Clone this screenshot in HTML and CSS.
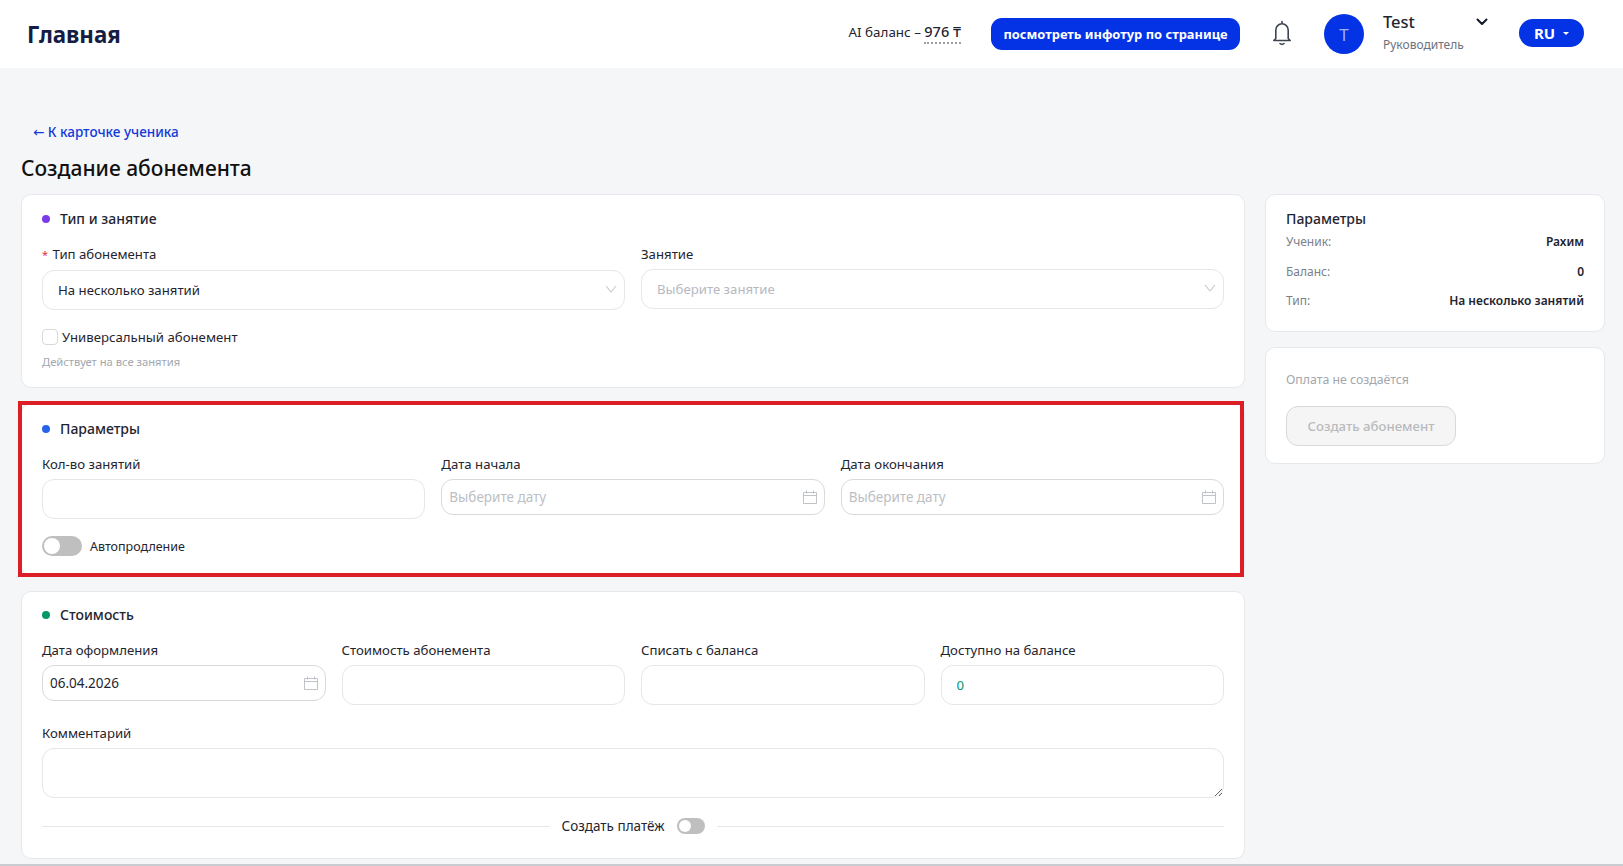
FILE: index.html
```html
<!DOCTYPE html>
<html lang="ru">

<head>
    <meta charset="UTF-8">
    <meta name="viewport" content="width=device-width, initial-scale=1.0">
    <title>Создание абонемента</title>
    <link rel="stylesheet" href="styles.css">
</head>

<body>
    <header class="topbar">
        <div class="topbar-title">Главная</div>
        <div class="ai-balance">AI баланс – <span class="ai-amount">976 ₸</span></div>
        <button class="tour-btn" type="button">посмотреть инфотур по странице</button>
        <svg class="bell" viewBox="0 0 24 28" fill="none" stroke="#3d4450" stroke-width="1.6" stroke-linecap="round" stroke-linejoin="round">
            <path d="M12 2.500v1.600M5.800 19.500V11a6.200 6.200 0 0 1 12.400 0v8.500l2 2H3.800z" />
            <path d="M10 24.500q2 1.800 4 0" />
        </svg>
        <div class="avatar">T</div>
        <div class="user">
            <div class="user-name">Test</div>
            <div class="user-role">Руководитель</div>
        </div>
        <svg class="user-arrow" viewBox="0 0 12 8" fill="none" stroke="#111827" stroke-width="2" stroke-linecap="round" stroke-linejoin="round">
            <path d="M1.500 1.500 6 6l4.500-4.500" />
        </svg>
        <div class="lang">RU <span class="lang-caret"></span></div>
    </header>

    <main class="page">
        <a class="back-link" href="#">← К карточке ученика</a>
        <h1>Создание абонемента</h1>

        <div class="columns">
            <div class="form-col">
                <section class="card card-type">
                    <h2 class="card-title"><span class="dot dot-purple"></span>Тип и занятие</h2>
                    <div class="grid grid-2">
                        <div class="field">
                            <label><span class="required">*</span> Тип абонемента</label>
                            <div class="select">
                                <span>На несколько занятий</span>
                                <svg class="chevron" viewBox="0 0 12 8" fill="none" stroke="#c4c7cc" stroke-width="1.100"><path d="M1 1l5 6 5-6" /></svg>
                            </div>
                        </div>
                        <div class="field">
                            <label>Занятие</label>
                            <div class="select select-empty">
                                <span>Выберите занятие</span>
                                <svg class="chevron" viewBox="0 0 12 8" fill="none" stroke="#c4c7cc" stroke-width="1.100"><path d="M1 1l5 6 5-6" /></svg>
                            </div>
                        </div>
                    </div>
                    <label class="check"><span class="check-box"></span>Универсальный абонемент</label>
                    <p class="hint">Действует на все занятия</p>
                </section>

                <section class="card card-params">
                    <h2 class="card-title"><span class="dot dot-blue"></span>Параметры</h2>
                    <div class="grid grid-3">
                        <div class="field">
                            <label>Кол-во занятий</label>
                            <input class="input" type="text">
                        </div>
                        <div class="field">
                            <label>Дата начала</label>
                            <div class="date">
                                <span class="date-empty">Выберите дату</span>
                                <svg class="cal" viewBox="0 0 14 14" fill="none" stroke="#bfc2c7"><path d="M.5 2.500h13v11H.5zM.5 5.500h13M3.500.5v3M10.500.5v3" /></svg>
                            </div>
                        </div>
                        <div class="field">
                            <label>Дата окончания</label>
                            <div class="date">
                                <span class="date-empty">Выберите дату</span>
                                <svg class="cal" viewBox="0 0 14 14" fill="none" stroke="#bfc2c7"><path d="M.5 2.500h13v11H.5zM.5 5.500h13M3.500.5v3M10.500.5v3" /></svg>
                            </div>
                        </div>
                    </div>
                    <div class="renew">
                        <label class="switch"><input type="checkbox"><span class="slider"></span></label>
                        <span>Автопродление</span>
                    </div>
                    <div class="highlight"></div>
                </section>

                <section class="card card-cost">
                    <h2 class="card-title"><span class="dot dot-green"></span>Стоимость</h2>
                    <div class="grid grid-4">
                        <div class="field">
                            <label>Дата оформления</label>
                            <div class="date date-filled">
                                <span>06.04.2026</span>
                                <svg class="cal" viewBox="0 0 14 14" fill="none" stroke="#bfc2c7"><path d="M.5 2.500h13v11H.5zM.5 5.500h13M3.500.5v3M10.500.5v3" /></svg>
                            </div>
                        </div>
                        <div class="field">
                            <label>Стоимость абонемента</label>
                            <input class="input" type="text">
                        </div>
                        <div class="field">
                            <label>Списать с баланса</label>
                            <input class="input" type="text">
                        </div>
                        <div class="field">
                            <label>Доступно на балансе</label>
                            <input class="input input-green" type="text" value="0">
                        </div>
                    </div>
                    <div class="field field-comment">
                        <label>Комментарий</label>
                        <textarea class="textarea"></textarea>
                    </div>
                    <div class="divider">
                        <span>Создать платёж</span>
                        <label class="switch switch-small"><input type="checkbox"><span class="slider"></span></label>
                    </div>
                </section>
            </div>

            <aside class="side-col">
                <section class="card side-card">
                    <h3 class="side-title">Параметры</h3>
                    <div class="side-row side-row-first"><span>Ученик:</span><b>Рахим</b></div>
                    <div class="side-row"><span>Баланс:</span><b>0</b></div>
                    <div class="side-row"><span>Тип:</span><b>На несколько занятий</b></div>
                </section>
                <section class="card side-card side-card-action">
                    <p class="no-payment">Оплата не создаётся</p>
                    <button class="create-btn" type="button" disabled>Создать абонемент</button>
                </section>
            </aside>
        </div>
    </main>
</body>

</html>
```

FILE: styles.css
```css
* {
    margin: 0;
    padding: 0;
    box-sizing: border-box;
}

html,
body {
    height: 100%;
    overflow: hidden;
}

body {
    font-family: "Noto Sans", "DejaVu Sans", sans-serif;
    background-color: #f5f6f8;
    color: #1f2530;
    display: flex;
    flex-direction: column;
}

/* Top bar */
.topbar {
    height: 68px;
    flex: none;
    background-color: #fff;
    display: flex;
    align-items: center;
    padding: 0 39px 0 27px;
}

.topbar-title {
    font-size: 22.300px;
    font-weight: 700;
    color: #141d45;
    margin-right: auto;
}

.ai-balance {
    font-size: 13.400px;
    color: #1f2530;
    margin-bottom: 7px;
}

.ai-amount {
    font-size: 14.500px;
    font-weight: 500;
    border-bottom: 2px dotted #9a9ea6;
    padding-bottom: 1px;
}

.tour-btn {
    width: 249px;
    height: 32px;
    margin-left: 30px;
    border: none;
    border-radius: 11px;
    background-color: #0433e6;
    color: #fff;
    font-family: inherit;
    font-size: 12.900px;
    font-weight: 700;
}

.bell {
    width: 24px;
    height: 28px;
    margin-left: 30px;
    margin-bottom: 2px;
}

.avatar {
    width: 40px;
    height: 40px;
    margin-left: 30px;
    border-radius: 50%;
    background-color: #0433e6;
    color: #9fb0f5;
    font-size: 17px;
    display: flex;
    align-items: center;
    justify-content: center;
}

.user {
    margin-left: 19px;
    margin-bottom: 4px;
    width: 93px;
}

.user-name {
    font-size: 16.500px;
    font-weight: 500;
    line-height: 22px;
}

.user-role {
    font-size: 12px;
    line-height: 18px;
    margin-top: 3px;
    color: #6b7280;
}

.user-arrow {
    width: 12px;
    height: 8px;
    margin-bottom: 24px;
}

.lang {
    width: 65px;
    height: 28px;
    margin-left: 31px;
    margin-bottom: 2px;
    border-radius: 14px;
    background-color: #0433e6;
    color: #fff;
    font-size: 15px;
    font-weight: 700;
    display: flex;
    align-items: center;
    justify-content: center;
    gap: 8px;
}

.lang-caret {
    border-left: 3px solid transparent;
    border-right: 3px solid transparent;
    border-top: 3px solid #fff;
}

/* Page */
.page {
    flex: 1;
    min-height: 0;
    padding: 55px 18px 0 21px;
    border-bottom: 2px solid #c9ccd1;
    overflow: hidden;
}

.back-link {
    display: block;
    margin-left: 12px;
    font-size: 13.500px;
    font-weight: 500;
    line-height: 18px;
    color: #1238d8;
    text-decoration: none;
}

h1 {
    font-size: 21px;
    font-weight: 500;
    line-height: 28px;
    color: #111;
    margin-top: 13px;
    margin-bottom: 12px;
}

.columns {
    display: flex;
    gap: 20px;
    align-items: flex-start;
}

.form-col {
    width: 1224px;
    display: flex;
    flex-direction: column;
    gap: 15px;
}

.side-col {
    flex: 1;
    display: flex;
    flex-direction: column;
    gap: 15px;
}

.card {
    position: relative;
    background-color: #fff;
    border: 1px solid #e6e8ec;
    border-radius: 10px;
    padding: 14px 20px 15px;
}

.card-type {
    padding-bottom: 17px;
}

.card-params {
    padding-top: 15px;
    padding-bottom: 19px;
}

.card-cost {
    padding-top: 13px;
}

.card-title {
    display: flex;
    align-items: center;
    font-size: 14px;
    font-weight: 500;
    line-height: 20px;
    margin-bottom: 16px;
}

.dot {
    width: 8px;
    height: 8px;
    border-radius: 50%;
    margin-right: 10px;
}

.dot-purple {
    background-color: #7c3aed;
}

.dot-blue {
    background-color: #2563eb;
}

.dot-green {
    background-color: #059669;
}

/* Annotation frame drawn over the card */
.highlight {
    position: absolute;
    top: -3px;
    left: -4px;
    right: 0;
    bottom: -2px;
    border: 4px solid #dc1f26;
    pointer-events: none;
}

/* Form */
.grid {
    display: grid;
    column-gap: 16px;
    align-items: start;
}

.grid-2 {
    grid-template-columns: repeat(2, 1fr);
}

.grid-3 {
    grid-template-columns: repeat(3, 1fr);
}

.grid-4 {
    grid-template-columns: repeat(4, 1fr);
}

.field label {
    display: block;
    font-size: 13.200px;
    line-height: 18px;
    margin-bottom: 6px;
}

.required {
    color: #d9363e;
    font-size: 11px;
    margin-right: 1px;
}

.input,
.select,
.textarea {
    width: 100%;
    height: 40px;
    border: 1px solid #e4e6ea;
    border-radius: 12px;
    background-color: #fff;
    font-family: inherit;
    font-size: 13.200px;
    color: #1f2530;
    outline: none;
}

.input {
    padding: 0 15px;
}

.input-green {
    color: #059669;
}

.select {
    display: flex;
    align-items: center;
    justify-content: space-between;
    padding: 0 7px 0 15px;
}

.select-empty {
    color: #b6b9bf;
}

.chevron {
    width: 12px;
    height: 8px;
    margin-bottom: 3px;
}

.date {
    height: 36px;
    border: 1px solid #d9d9d9;
    border-radius: 12px;
    display: flex;
    align-items: center;
    justify-content: space-between;
    padding: 0 7px;
    font-size: 13.500px;
}

.date-empty {
    color: #bcbfc4;
}

.cal {
    width: 14px;
    height: 14px;
}

.date-filled {
    color: #1f2530;
}

.check {
    display: flex;
    align-items: center;
    gap: 4px;
    font-size: 13.200px;
    line-height: 18px;
    margin-top: 18px;
}

.check-box {
    width: 16px;
    height: 16px;
    border: 1px solid #d9d9d9;
    border-radius: 4px;
}

.hint {
    font-size: 11.200px;
    line-height: 16px;
    margin-top: 8px;
    color: #a3a7ae;
}

.renew {
    display: flex;
    align-items: center;
    gap: 8px;
    font-size: 12.500px;
    margin-top: 17px;
}

/* Toggle */
.switch {
    position: relative;
    display: inline-block;
    width: 40px;
    height: 20px;
}

.switch input {
    display: none;
}

.slider {
    position: absolute;
    top: 0;
    left: 0;
    right: 0;
    bottom: 0;
    background-color: #bfbfbf;
    border-radius: 10px;
}

.slider:before {
    position: absolute;
    content: "";
    height: 16px;
    width: 16px;
    left: 2px;
    top: 2px;
    background-color: #fff;
    border-radius: 50%;
}

.switch-small {
    width: 28px;
    height: 16px;
}

.switch-small .slider:before {
    height: 12px;
    width: 12px;
}

.field-comment {
    margin-top: 19px;
}

.textarea {
    display: block;
    height: 50px;
    padding: 8px 15px;
}

.divider {
    display: flex;
    align-items: center;
    gap: 12px;
    font-size: 13.500px;
    margin-top: 19px;
    margin-bottom: 8px;
}

.divider:before,
.divider:after {
    content: "";
    flex: 1;
    height: 1px;
    background-color: #e4e6ea;
}

/* Side column */
.side-card {
    padding: 14px 20px 21px;
}

.side-card-action {
    padding-bottom: 17px;
}

.side-title {
    font-size: 14px;
    font-weight: 500;
    line-height: 20px;
}

.side-row {
    display: flex;
    justify-content: space-between;
    font-size: 12px;
    line-height: 18px;
    margin-top: 11.500px;
    color: #7b8089;
}

.side-row-first {
    margin-top: 4px;
}

.side-row b {
    font-weight: 600;
    color: #1f2530;
}

.no-payment {
    font-size: 12.300px;
    line-height: 18px;
    margin-top: 9px;
    color: #a3a7ae;
}

.create-btn {
    width: 170px;
    height: 40px;
    margin-top: 17px;
    border: 1px solid #d9d9d9;
    border-radius: 12px;
    background-color: #f5f5f5;
    color: #b8babd;
    font-family: inherit;
    font-size: 13.200px;
    font-weight: 500;
}
```
